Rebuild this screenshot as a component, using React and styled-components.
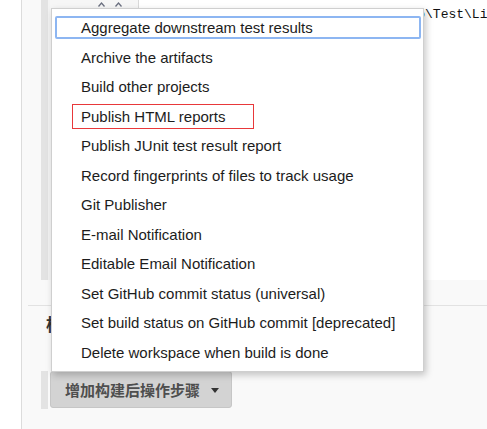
import React from 'react';
import styled, { createGlobalStyle } from 'styled-components';

const GlobalStyle = createGlobalStyle`
  html, body {
    margin: 0;
    padding: 0;
    background: #fff;
    font-family: "Liberation Sans", Arial, sans-serif;
  }
`;

const Page = styled.div`
  position: relative;
  display: flex;
  width: 487px;
  height: 429px;
  overflow: hidden;
`;

const Gutter = styled.div`
  flex-shrink: 0;
  width: 21px;
  background: #fff;
  border-right: 1px solid #dcdcdc;
`;

const Main = styled.div`
  flex: 1;
  min-width: 0;
  display: flex;
  flex-direction: column;
  background: #f9f9f9;
`;

const TopRow = styled.div`
  display: flex;
  height: 280px;
  padding-left: 19px;
`;

const Stripe = styled.div`
  flex-shrink: 0;
  width: 7px;
  background: #e3e3e3;
  height: ${p => p.$h || 'auto'};
`;

const Panel = styled.div`
  flex: 1;
  min-width: 0;
  display: flex;
  background: #f3f3f3;
  padding-left: 2px;
`;

const SortCell = styled.div`
  flex-shrink: 0;
  width: 89px;
  background: #f6f6f6;
  border-right: 1px solid #d9d9d9;
  display: flex;
  gap: 10px;
  padding: 2px 0 0 48px;
  box-sizing: border-box;
`;

const Field = styled.div`
  flex: 1;
  min-width: 0;
  background: #fff;
  overflow: hidden;
  white-space: nowrap;
  padding: 7px 0 0 13px;
  font-family: "Liberation Mono", "Courier New", monospace;
  font-size: 13px;
  color: #111;
`;

const Divider = styled.div`
  margin: 25px 0 0 6px;
  border-top: 1px solid #e2e2e2;
`;

const Heading = styled.div`
  margin: 8px 0 0 24px;
  font-size: 17px;
  line-height: 24px;
  font-weight: bold;
  color: #333;
  font-family: "Liberation Sans", "Noto Sans CJK SC", sans-serif;
`;

const ButtonRow = styled.div`
  display: flex;
  gap: 2px;
  margin-top: 33px;
  padding-left: 19px;
`;

const AddButton = styled.div`
  flex-shrink: 0;
  display: flex;
  align-items: center;
  height: 37px;
  padding: 0 12px 0 14px;
  gap: 11px;
  background: #d3d3d3;
  border: 1px solid #c6c6c6;
  border-radius: 3px;
  box-sizing: border-box;
  white-space: nowrap;
  font-family: "Noto Sans CJK SC", sans-serif;
  font-size: 15px;
  font-weight: bold;
  color: #4e4e4e;
`;

const Caret = styled.span`
  width: 0;
  height: 0;
  border-left: 4.5px solid transparent;
  border-right: 4.5px solid transparent;
  border-top: 5px solid #333;
  margin-top: 1px;
`;

const Menu = styled.div`
  position: absolute;
  left: 51px;
  top: 8px;
  width: 373px;
  background: #fff;
  border: 1px solid #cfcfcf;
  box-sizing: border-box;
  padding: 7px 0 1px;
  box-shadow: 2px 3px 7px rgba(0, 0, 0, 0.22);
`;

const Item = styled.div`
  display: flex;
  align-items: center;
  box-sizing: border-box;
  height: 23px;
  margin: 0 2px 6.5px 3px;
  padding-left: 24px;
  border: 2px solid ${p => (p.$focused ? '#8db6f2' : 'transparent')};
  border-radius: 2px;
  font-size: 15px;
  color: #1c1c1c;
  white-space: nowrap;
`;

const Marked = styled.span`
  position: relative;
  &::after {
    content: '';
    position: absolute;
    left: -9px;
    right: -28px;
    top: -4px;
    bottom: -4px;
    border: 1px solid #e8383a;
  }
`;

const Chevron = () => (
  <svg width="7" height="5" viewBox="0 0 7 5">
    <polyline points="0.5,4.5 3.5,1 6.5,4.5" fill="none" stroke="#6b7080" strokeWidth="1.3" />
  </svg>
);

const items = [
  'Aggregate downstream test results',
  'Archive the artifacts',
  'Build other projects',
  'Publish HTML reports',
  'Publish JUnit test result report',
  'Record fingerprints of files to track usage',
  'Git Publisher',
  'E-mail Notification',
  'Editable Email Notification',
  'Set GitHub commit status (universal)',
  'Set build status on GitHub commit [deprecated]',
  'Delete workspace when build is done',
];

export default function App() {
  return (
    <>
      <GlobalStyle />
      <Page>
        <Gutter />
        <Main>
          <TopRow>
            <Stripe />
            <Panel>
              <SortCell>
                <Chevron />
                <Chevron />
              </SortCell>
              <Field>C:\Users\Administrator\Desktop\Auto\Test\Lib\report</Field>
            </Panel>
          </TopRow>
          <Divider />
          <Heading>构建后操作</Heading>
          <ButtonRow>
            <Stripe $h="38px" />
            <AddButton>
              增加构建后操作步骤
              <Caret />
            </AddButton>
          </ButtonRow>
        </Main>
        <Menu>
          {items.map((label, i) => (
            <Item key={label} $focused={i === 0}>
              {label === 'Publish HTML reports' ? <Marked>{label}</Marked> : label}
            </Item>
          ))}
        </Menu>
      </Page>
    </>
  );
}
